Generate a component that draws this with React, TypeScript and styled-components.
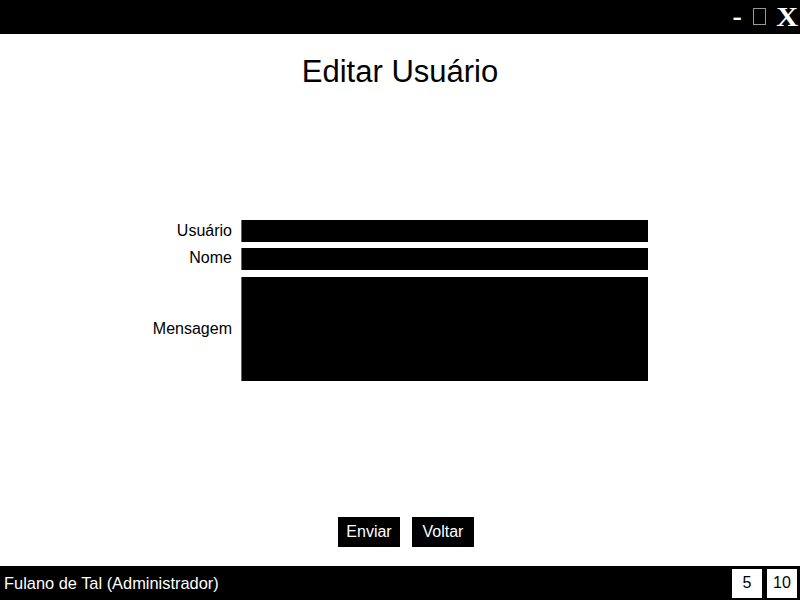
import React from "react";
import styled, { createGlobalStyle } from "styled-components";

const Global = createGlobalStyle`
  html, body { margin: 0; padding: 0; background: #fff; }
  body { font-family: "Liberation Sans", Arial, sans-serif; overflow: hidden; }
  * { box-sizing: border-box; }
`;

const Page = styled.div`
  width: 800px;
  height: 600px;
  display: flex;
  flex-direction: column;
  background: #fff;
`;

const TitleBar = styled.header`
  height: 34px;
  background: #000;
  display: flex;
  justify-content: flex-end;
  align-items: center;
  padding-right: 3px;
`;

const WinButton = styled.span`
  font-family: "Liberation Serif", "Times New Roman", serif;
  font-weight: bold;
  font-size: 28px;
  line-height: 1;
  color: #fff;
  display: inline-block;
  transform: scaleX(1.08);
`;

const Dash = styled(WinButton)`
  margin-right: 11px;
  margin-top: -2px;
  transform: none;
`;

const Box = styled.span`
  display: inline-block;
  width: 13px;
  height: 17px;
  border: 1px solid #9a9a9a;
  margin-right: 11px;
  margin-top: -2px;
`;

const Main = styled.main`
  flex: 1;
  display: flex;
  flex-direction: column;
  align-items: center;
`;

const Title = styled.h1`
  margin: 20px 0 0;
  font-size: 31px;
  line-height: 35px;
  font-weight: normal;
  color: #000;
`;

const Form = styled.div`
  margin-top: 131px;
  display: grid;
  grid-template-columns: 80px 407px;
  column-gap: 9px;
  row-gap: 6px;
  align-items: center;
`;

const Label = styled.label<{ $shift?: number }>`
  font-size: 16px;
  color: #000;
  text-align: right;
  white-space: nowrap;
  margin-top: ${(p) => (p.$shift ? `${p.$shift}px` : "0")};
`;

const Field = styled.div<{ $h: number }>`
  height: ${(p) => p.$h}px;
  background: #000;
  border-left: 1px solid #666;
`;

const Spacer = styled.div`
  flex: 1;
`;

const Actions = styled.div`
  display: flex;
  gap: 12px;
  padding-left: 12px;
  margin-bottom: 19px;
`;

const Button = styled.button`
  width: 62px;
  height: 30px;
  background: #000;
  color: #fff;
  border: none;
  font-family: "Liberation Sans", Arial, sans-serif;
  font-size: 16px;
  padding: 0;
  cursor: pointer;
`;

const StatusBar = styled.footer`
  height: 34px;
  background: #000;
  display: flex;
  align-items: center;
  padding: 0 3px 0 4px;
  gap: 5px;
`;

const User = styled.span`
  flex: 1;
  color: #fff;
  font-size: 16.4px;
`;

const Counter = styled.span`
  width: 30px;
  height: 29px;
  background: #fff;
  color: #000;
  font-size: 16px;
  display: flex;
  align-items: center;
  justify-content: center;
`;

export default function App() {
  return (
    <Page>
      <Global />
      <TitleBar>
        <Dash>-</Dash>
        <Box />
        <WinButton>X</WinButton>
      </TitleBar>
      <Main>
        <Title>Editar Usuário</Title>
        <Form>
          <Label>Usuário</Label>
          <Field $h={22} />
          <Label $shift={-3}>Nome</Label>
          <Field $h={22} style={{ marginBottom: 1 }} />
          <Label>Mensagem</Label>
          <Field $h={104} />
        </Form>
        <Spacer />
        <Actions>
          <Button>Enviar</Button>
          <Button>Voltar</Button>
        </Actions>
      </Main>
      <StatusBar>
        <User>Fulano de Tal (Administrador)</User>
        <Counter>5</Counter>
        <Counter>10</Counter>
      </StatusBar>
    </Page>
  );
}
